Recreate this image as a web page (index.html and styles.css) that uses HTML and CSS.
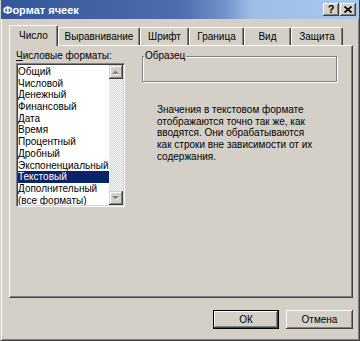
FILE: index.html
```html
<!DOCTYPE html>
<html lang="ru">

<head>
    <title>Формат ячеек</title>
    <meta charset="UTF-8">
    <link rel="stylesheet" href="styles.css">
</head>

<body>
    <div class="window">
        <div class="titlebar">
            <span class="title">Формат ячеек</span>
            <div class="cap-btns">
                <button class="cap-btn cap-help">?</button>
                <button class="cap-btn cap-close">
                    <svg width="8" height="7" viewBox="0 0 8 7">
                        <path d="M0.5 0.5 L7.5 6.5 M7.5 0.5 L0.5 6.5" stroke="#000" stroke-width="1.6" fill="none" />
                    </svg>
                </button>
            </div>
        </div>

        <div class="tabs">
            <div class="tab tab-active w-num">Число</div>
            <div class="tab w-align">Выравнивание</div>
            <div class="tab w-font">Шрифт</div>
            <div class="tab w-border">Граница</div>
            <div class="tab w-view">Вид</div>
            <div class="tab w-prot">Защита</div>
        </div>

        <div class="panel">
            <div class="col-left">
                <div class="label"><u>Ч</u>исловые форматы:</div>
                <div class="listbox">
                    <ul class="items">
                        <li>Общий</li>
                        <li>Числовой</li>
                        <li>Денежный</li>
                        <li>Финансовый</li>
                        <li>Дата</li>
                        <li>Время</li>
                        <li>Процентный</li>
                        <li>Дробный</li>
                        <li>Экспоненциальный</li>
                        <li class="sel">Текстовый</li>
                        <li>Дополнительный</li>
                        <li>(все форматы)</li>
                    </ul>
                    <div class="scrollbar">
                        <div class="sb-btn">
                            <svg width="8" height="5" viewBox="0 0 8 5">
                                <path d="M1 5 L4 2 L7 5 Z" fill="#fff" />
                                <path d="M0 4 L3.5 0.5 L7 4 Z" fill="#808080" />
                            </svg>
                        </div>
                        <div class="sb-btn">
                            <svg width="8" height="5" viewBox="0 0 8 5">
                                <path d="M1 1 L4 4.5 L7 1 Z" fill="#fff" />
                                <path d="M0 0 L3.5 3.5 L7 0 Z" fill="#808080" />
                            </svg>
                        </div>
                    </div>
                </div>
            </div>

            <div class="col-right">
                <fieldset class="sample">
                    <legend>Образец</legend>
                </fieldset>
                <p class="desc">
                    Значения в текстовом формате<br>
                    отображаются точно так же, как<br>
                    вводятся. Они обрабатываются<br>
                    как строки вне зависимости от их<br>
                    содержания.
                </p>
            </div>
        </div>

        <div class="actions">
            <button class="btn btn-default">ОК</button>
            <button class="btn btn-cancel">Отмена</button>
        </div>
    </div>
</body>

</html>
```

FILE: styles.css
```css
* {
    box-sizing: border-box;
}

body {
    margin: 0;
    font-family: "Liberation Sans", Arial, sans-serif;
    font-size: 10px;
    color: #000;
    background: #d4d0c8;
}

.window {
    width: 360px;
    height: 341px;
    background: #d4d0c8;
    border-left: 1px solid #d4d0c8;
    border-right: 1px solid #404040;
    border-bottom: 1px solid #404040;
    box-shadow: inset 1px 0 #fff, inset -1px -1px #808080;
}

/* заголовок окна */
.titlebar {
    height: 19px;
    display: flex;
    align-items: center;
    justify-content: space-between;
    padding: 0 3px 0 2px;
    background: linear-gradient(to right, #34569a 0%, #4c6eaf 50%, #6f90c8 62%, #9dbde6 70%, #a8c8ee 100%);
}

.title {
    color: #fff;
    font-weight: bold;
    font-size: 11px;
}

.cap-btns {
    display: flex;
    gap: 1px;
}

.cap-btn {
    width: 16px;
    height: 13px;
    padding: 0;
    margin: 0;
    border: none;
    background: #d4d0c8;
    box-shadow: inset -1px -1px #404040, inset 1px 1px #fff, inset -2px -2px #808080;
    display: flex;
    align-items: center;
    justify-content: center;
    font-family: "Liberation Sans", Arial, sans-serif;
    font-weight: bold;
    font-size: 11px;
    line-height: 11px;
    color: #000;
}

/* вкладки */
.tabs {
    display: flex;
    align-items: flex-end;
    height: 20px;
    margin: 6px 0 0 8px;
    position: relative;
    z-index: 1;
}

.tab {
    height: 18px;
    line-height: 16px;
    padding-top: 1px;
    text-align: center;
    white-space: nowrap;
    background: #d4d0c8;
    border-top: 1px solid #fff;
    border-left: 1px solid #fff;
    border-right: 1px solid #404040;
    box-shadow: inset -1px 0 #808080;
    border-radius: 2px 2px 0 0;
}

.tab-active {
    height: 21px;
    margin-bottom: -1px;
    padding-top: 2px;
}

.w-num { width: 49px; }
.w-align { width: 82px; }
.w-font { width: 49px; }
.w-border { width: 55px; }
.w-view { width: 47px; }
.w-prot { width: 52px; }

.panel {
    display: flex;
    margin-left: 8px;
    width: 344px;
    height: 253px;
    padding: 4px 6px;
    border-top: 1px solid #fff;
    border-left: 1px solid #fff;
    border-right: 1px solid #404040;
    border-bottom: 1px solid #404040;
    box-shadow: inset -1px -1px #808080;
}

.col-left {
    width: 109px;
}

.label {
    height: 12px;
    line-height: 12px;
    margin-bottom: 1px;
}

/* список форматов */
.listbox {
    display: flex;
    width: 109px;
    height: 144px;
    padding: 1px;
    background: #fff;
    border: 1px solid;
    border-color: #808080 #fff #fff #808080;
    box-shadow: inset 1px 1px #404040, inset -1px -1px #d4d0c8;
}

.items {
    flex: 1;
    list-style: none;
    margin: 0;
    padding: 1px 0 0;
    overflow: hidden;
}

.items li {
    height: 11.7px;
    line-height: 11.7px;
    white-space: nowrap;
}

.items li.sel {
    background: #0a246a;
    color: #fff;
}

.scrollbar {
    width: 14px;
    display: flex;
    flex-direction: column;
    justify-content: space-between;
    background-color: #fff;
    background-image: conic-gradient(#d4d0c8 25%, #fff 0 50%, #d4d0c8 0 75%, #fff 0);
    background-size: 2px 2px;
}

.sb-btn {
    width: 14px;
    height: 14px;
    display: flex;
    align-items: center;
    justify-content: center;
    background: #d4d0c8;
    box-shadow: inset -1px -1px #404040, inset 1px 1px #d4d0c8, inset -2px -2px #808080, inset 2px 2px #fff;
}

.col-right {
    width: 195px;
    margin-left: 17px;
}

.sample {
    height: 32px;
    margin: 0;
    padding: 0;
    border: 1px solid #808080;
    box-shadow: inset 1px 1px #fff, 1px 1px #fff;
}

.sample legend {
    padding: 0 1px;
    margin-left: 1px;
    line-height: 12px;
    background: #d4d0c8;
}

.desc {
    margin: 22px 0 0 15px;
    line-height: 11.7px;
}

/* кнопки */
.actions {
    display: flex;
    justify-content: flex-end;
    gap: 7px;
    margin-top: 12px;
    padding-right: 6px;
}

.btn {
    height: 19px;
    padding: 0;
    border: none;
    background: #d4d0c8;
    font-family: "Liberation Sans", Arial, sans-serif;
    font-size: 10px;
    color: #000;
    box-shadow: inset -1px -1px #404040, inset 1px 1px #fff, inset -2px -2px #808080;
}

.btn-default {
    width: 66px;
    border: 1px solid #000;
}

.btn-cancel {
    width: 67px;
}
```
